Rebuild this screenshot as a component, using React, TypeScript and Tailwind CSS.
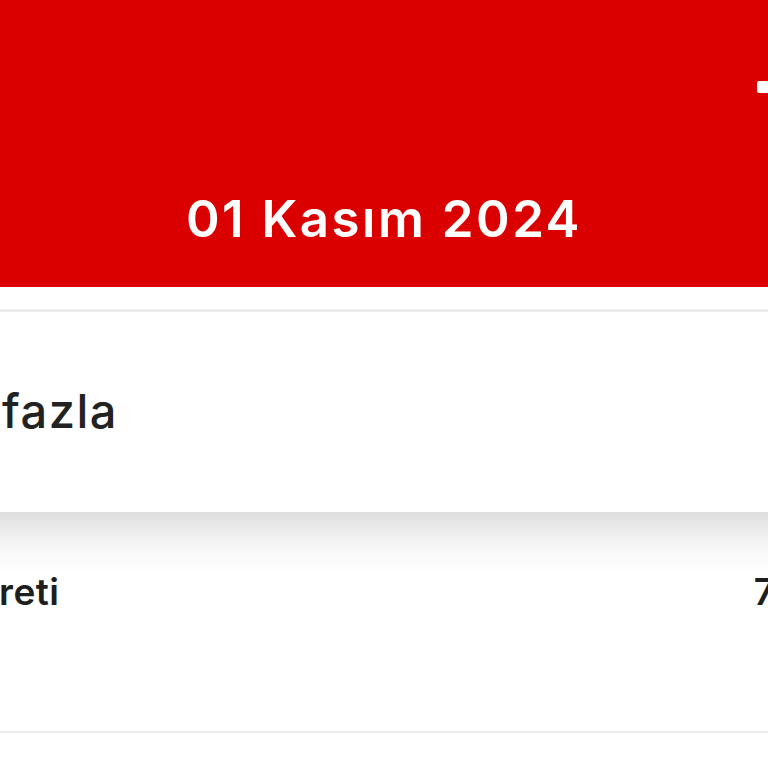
import React from "react";

export default function App() {
  return (
    <div className="w-[768px] h-[768px] overflow-hidden bg-white" style={{ fontFamily: "Inter, 'Noto Sans', sans-serif" }}>
      <div className="h-[287px] bg-[#db0000] flex flex-col">
        <div className="h-[81px]" />
        <div className="flex justify-end">
          <div className="w-[12px] h-[12px] bg-white rounded-[2px] -mr-[1px]" />
        </div>
        <div className="flex-1 flex items-center justify-center pt-[56px]">
          <span className="text-white text-[51px] font-semibold tracking-[2.5px] leading-none">01 Kasım 2024</span>
        </div>
      </div>
      <div className="h-[22px] bg-white" />
      <div className="h-[3px] bg-[#ebebeb]" />
      <div className="h-[200px] bg-white flex items-center">
        <span className="text-[47px] font-medium tracking-[1.5px] text-[#222] leading-none pl-[2px] -mt-[4px]">fazla</span>
      </div>
      <div className="h-[60px] bg-gradient-to-b from-[#dedede] via-[#f5f5f5] to-white" />
      <div className="h-[159px] flex items-start justify-between pt-[1px]">
        <span className="text-[37px] font-semibold tracking-[0.5px] text-[#1e1e1e] leading-none -ml-[1px]">reti</span>
        <span className="text-[37px] font-semibold text-[#1e1e1e] leading-none -mr-[7px]">7</span>
      </div>
      <div className="h-[2px] bg-[#ebebeb]" />
    </div>
  );
}
